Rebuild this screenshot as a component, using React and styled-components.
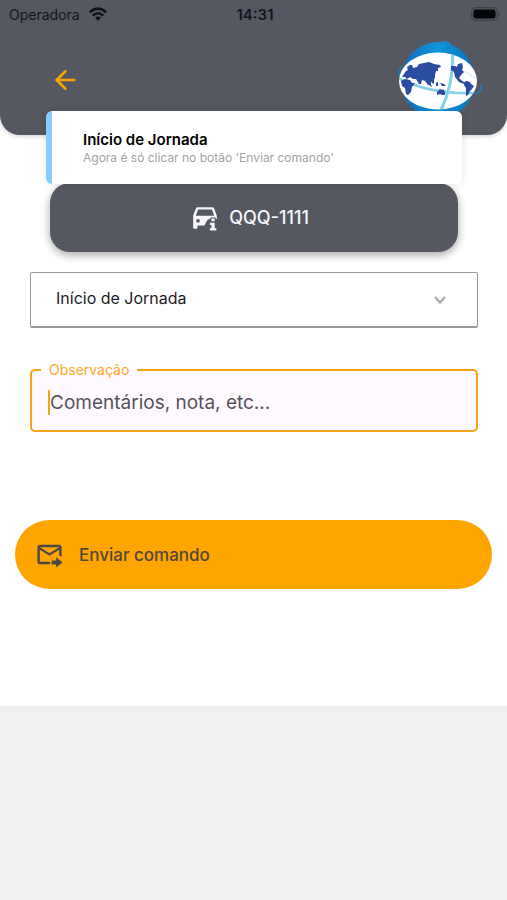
import React from 'react';
import styled, { createGlobalStyle } from 'styled-components';

const GlobalStyle = createGlobalStyle`
  * {
    box-sizing: border-box;
  }

  body {
    margin: 0;
    font-family: Inter, "Liberation Sans", sans-serif;
    background-color: #F0F0F0;
  }

  button, input, select {
    font-family: inherit;
  }
`;

const Screen = styled.main`
  position: relative;
  width: 100%;
  padding-bottom: 117px;
  background-color: #FFFFFF;
`;

const Header = styled.header`
  height: 135px;
  border-radius: 0 0 20px 20px;
  background-color: #555861;
  box-shadow: 0 1px 5px #00000033;
`;

const StatusBar = styled.div`
  display: grid;
  grid-template-columns: 1fr auto 1fr;
  align-items: center;
  height: 28px;
  padding: 0 6px 0 9px;
  font-size: 14px;
  color: #14161F;
`;

const Carrier = styled.span`
  display: flex;
  align-items: center;
  gap: 8px;
`;

const Clock = styled.time`
  font-size: 15px;
  font-weight: 600;
`;

const Battery = styled.svg`
  justify-self: end;
`;

const TopBar = styled.nav`
  display: flex;
  justify-content: space-between;
  align-items: flex-start;
  padding: 12px 22px 0 52px;
`;

const BackButton = styled.button`
  display: flex;
  margin-top: 26px;
  padding: 0;
  border: none;
  background: none;
  color: #FFA500;
  cursor: pointer;
`;

const Toast = styled.div`
  position: absolute;
  top: 111px;
  left: 46px;
  right: 45px;
  height: 73px;
  display: flex;
  flex-direction: column;
  justify-content: center;
  padding-left: 31px;
  border-left: 6px solid #87CEFA;
  border-radius: 6px;
  background-color: #FFFFFF;
  box-shadow: 0 0 8px #0000001A;
`;

const ToastTitle = styled.strong`
  font-size: 15px;
  font-weight: 600;
  line-height: 20px;
  color: #000000;
`;

const ToastText = styled.span`
  font-size: 12px;
  line-height: 16px;
  color: #A3A3A3;
`;

const VehicleButton = styled.button`
  display: flex;
  justify-content: center;
  align-items: center;
  gap: 10px;
  width: calc(100% - 99px);
  height: 69px;
  margin: 48px 49px 20px 50px;
  padding: 0 8px 0 0;
  border: none;
  border-radius: 20px;
  background-color: #555861;
  box-shadow: 0 3px 8px #00000059;
  font-size: 18px;
  font-weight: 500;
  color: #F5F5FA;
  cursor: pointer;
`;

const Form = styled.form`
  display: flex;
  flex-direction: column;
`;

const SelectBox = styled.div`
  position: relative;
  margin: 0 29px 0 30px;
`;

const Select = styled.select`
  display: block;
  width: 100%;
  height: 56px;
  padding: 0 48px 4px 25px;
  border: 1px solid #999999;
  border-bottom-width: 2px;
  border-radius: 2px;
  appearance: none;
  background-color: #FFFFFF;
  font-size: 16px;
  color: #1C1C1E;
`;

const Chevron = styled.svg`
  position: absolute;
  top: 22px;
  right: 31px;
  pointer-events: none;
`;

const Field = styled.fieldset`
  display: flex;
  align-items: center;
  min-width: 0;
  height: 70px;
  margin: 34px 29px 88px 30px;
  padding: 0 16px 0;
  border: 2px solid #F5A31A;
  border-radius: 5px;
  background-color: #FFFAFF;
`;

const Legend = styled.legend`
  margin-left: -7px;
  padding: 0 8px;
  font-size: 14px;
  line-height: 16px;
  color: #FFA726;
`;

const Caret = styled.span`
  width: 2px;
  height: 25px;
  background-color: #F5A31A;

  ${Field}:focus-within & {
    visibility: hidden;
  }
`;

const Input = styled.input`
  flex: 1;
  min-width: 0;
  height: 48px;
  padding: 0;
  border: none;
  outline: none;
  background: none;
  font-size: 19px;
  color: #1C1C1E;
  caret-color: #F5A31A;

  &::placeholder {
    color: #55525A;
    opacity: 1;
  }
`;

const SubmitButton = styled.button`
  display: flex;
  align-items: center;
  gap: 15px;
  height: 69px;
  margin: 0 15px;
  padding: 0 20px;
  border: none;
  border-radius: 35px;
  background-color: #FFA500;
  font-size: 17px;
  font-weight: 500;
  color: #50483F;
  cursor: pointer;
`;

function WifiIcon() {
  return (
    <svg width="20" height="14" viewBox="0 0 20 14" fill="none" stroke="#101219" aria-hidden="true">
      <path d="M1.8 5.2Q10-2 18.2 5.2" strokeWidth="2.6" />
      <path d="M4.7 8.6Q10 3.8 15.3 8.6" strokeWidth="2.5" />
      <path d="M7 10.8Q10 8.2 13 10.8L10 13.8Z" fill="#101219" stroke="none" />
    </svg>
  );
}

function BatteryIcon() {
  return (
    <Battery width="30" height="14" viewBox="0 0 30 14" aria-hidden="true">
      <rect x="0.7" y="0.7" width="25.6" height="12.6" rx="4" fill="none" stroke="#3F4149" strokeWidth="1.3" />
      <rect x="2.5" y="2.5" width="22" height="9" rx="2.2" fill="#05060A" />
      <path d="M27.5 4.8Q30 7 27.5 9.2Z" fill="#3F4149" />
    </Battery>
  );
}

function GlobeLogo() {
  return (
    <svg width="88" height="80" viewBox="0 0 88 80" role="img" aria-label="Globo">
      <defs>
        <linearGradient id="ocean" x1="0" y1="0" x2="1" y2="0">
          <stop offset="0" stopColor="#1268B8" />
          <stop offset="0.5" stopColor="#0F96DC" />
          <stop offset="1" stopColor="#0870BA" />
        </linearGradient>
        <clipPath id="lens">
          <ellipse cx="41" cy="41" rx="39" ry="28.5" />
        </clipPath>
      </defs>
      <ellipse cx="41" cy="40.5" rx="37" ry="38.5" fill="url(#ocean)" />
      <path d="M5 27Q-1 31 4 38" fill="none" stroke="#1677B8" strokeWidth="1.5" />
      <path d="M44 2.5Q50 1 53 4.500" fill="none" stroke="#168ACB" strokeWidth="2" />
      <path d="M78 54Q86 51 84 44" fill="none" stroke="#1E7DB5" strokeWidth="1.5" />
      <ellipse cx="41" cy="41" rx="39" ry="28.5" fill="#FFFFFF" />
      <g clipPath="url(#lens)" fill="none" stroke="#83D2EA">
        <path d="M1 38Q34 55 81 53" strokeWidth="2.8" />
        <path d="M55.5 12Q57 44 43.500 71" strokeWidth="3" />
        <path d="M57 28Q69 31 80 39" strokeWidth="1" stroke="#C6EAF5" />
      </g>
      <g fill="#2A4DA2">
        <path d="M7 34l2-3 2-1-1-3 3-2 2 0 1 3 4-1 2-3 5-1 5-1 5 2 6 1 1 2-3 1 0 3-2 0-1 4 0 3-3 3-2 4-2 0-3-4-3-1-1 4-2 0-3-5-3 0-3-2-3 2-2-2-3 0Z" />
        <path d="M4 41l4-2 5 1 2 3 3 0-3 4-1 5-3 3-2-1-1-6-3-2Z" />
        <path d="M31 41l2 1 2 5-2-1ZM35 38l2 1 0 5-2-1ZM39 43l2-1 0 4-2 0ZM43 43l4 1 2 2-4 0ZM40 52l3-3 2 1 1-1 2 3 0 3-3 0-2-1-3 1Z" />
        <path d="M54 26l4 0 2 1 1-3 4-1 1 4-1 3 2 2-3 3-2 3 2 2 4 3-1 1-5-2-4-5-1-5-3-2Z" />
        <path d="M67 42l3-1 3 1 1 2 3 2-2 3-2 2-2 4-2 1 0-8-2-3Z" />
      </g>
    </svg>
  );
}

function CarInfoIcon() {
  return (
    <svg width="28" height="28" viewBox="0 0 26 26" fill="#F5F5FA" aria-hidden="true">
      <path fillRule="evenodd" d="M6 3H20Q21 3 21.5 4.2L24 11V14H17.5Q15.5 14 14.5 16L12.5 20H6V22Q6 23 5 23H3Q2 23 2 22V11L4.5 4.2Q5 3 6 3ZM6.500 5L4.500 11H21.500L19.500 5ZM6.500 14A1.700 1.700 0 1 0 6.500 17.400A1.700 1.700 0 1 0 6.500 14Z" />
      <path d="M19 13.500H22V16H19ZM17.500 17.500H22V22.500H23.500V24.500H17.500V22.500H19V19.500H17.500Z" stroke="#555861" strokeWidth="2" paintOrder="stroke" />
    </svg>
  );
}

function MailSendIcon() {
  return (
    <svg width="29" height="29" viewBox="0 0 24 24" fill="currentColor" aria-hidden="true">
      <path d="M12.5 18H4V8L12 13L20 8V13.09C20.72 13.21 21.39 13.46 22 13.81V6C22 4.9 21.1 4 20 4H4C2.9 4 2 4.9 2 6V18C2 19.1 2.9 20 4 20H12.5ZM20 6L12 11L4 6H20M17.500 22.800V20.200H13.800V17H17.500V14.200L22.800 18.500Z" />
    </svg>
  );
}

export default function App() {
  return (
    <>
      <GlobalStyle />
      <Screen>
        <Header>
          <StatusBar>
            <Carrier>Operadora <WifiIcon /></Carrier>
            <Clock>14:31</Clock>
            <BatteryIcon />
          </StatusBar>
          <TopBar>
            <BackButton type="button" aria-label="Voltar">
              <svg width="28" height="28" viewBox="0 0 24 24" fill="none" stroke="currentColor" strokeWidth="2.2" strokeLinecap="round" aria-hidden="true">
                <path d="M19 12H4.5M11.5 4.5L4 12L11.5 19.5" />
              </svg>
            </BackButton>
            <GlobeLogo />
          </TopBar>
        </Header>

        <VehicleButton type="button">
          <CarInfoIcon />
          QQQ-1111
        </VehicleButton>

        <Form onSubmit={(e) => e.preventDefault()}>
          <SelectBox>
            <Select aria-label="Comando" defaultValue="inicio">
              <option value="inicio">Início de Jornada</option>
            </Select>
            <Chevron width="14" height="12" viewBox="0 0 14 12" fill="none" stroke="#AAAAAA" strokeWidth="2.4" aria-hidden="true">
              <path d="M2 3L7 8.5L12 3" />
            </Chevron>
          </SelectBox>

          <Field>
            <Legend>
              <label htmlFor="observacao">Observação</label>
            </Legend>
            <Caret />
            <Input id="observacao" type="text" placeholder="Comentários, nota, etc..." />
          </Field>

          <SubmitButton type="submit">
            <MailSendIcon />
            Enviar comando
          </SubmitButton>
        </Form>

        <Toast role="status">
          <ToastTitle>Início de Jornada</ToastTitle>
          <ToastText>Agora é só clicar no botão 'Enviar comando'</ToastText>
        </Toast>
      </Screen>
    </>
  );
}
